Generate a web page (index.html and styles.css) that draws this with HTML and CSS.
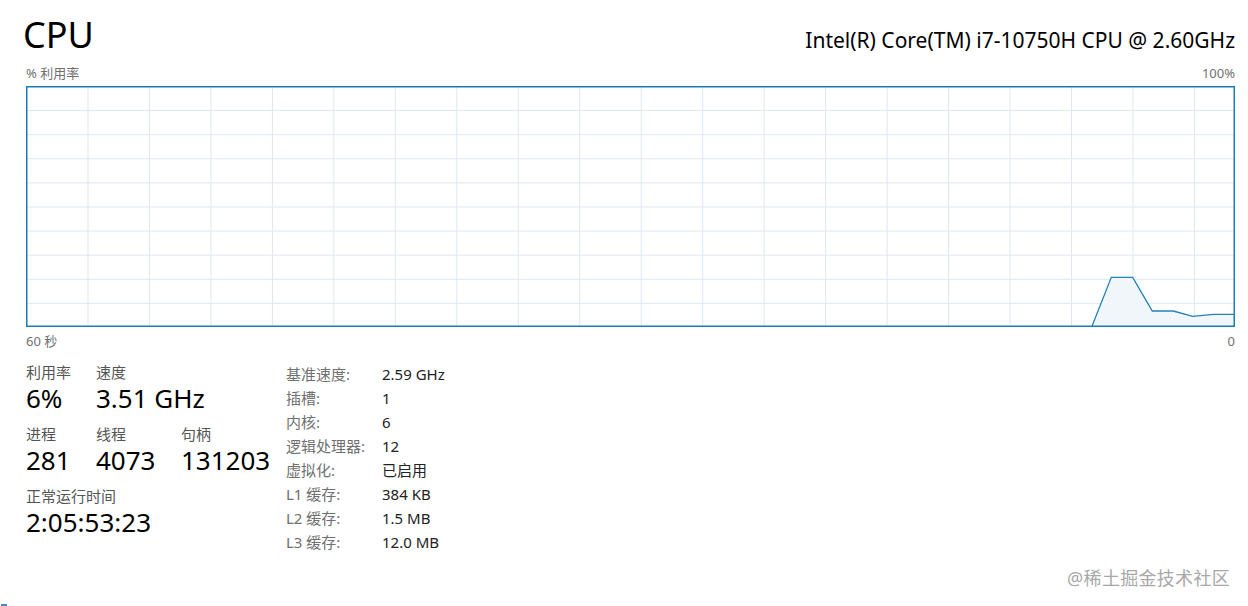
FILE: index.html
```html
<!DOCTYPE html>
<html lang="zh-CN">
<head>
    <meta charset="UTF-8">
    <title>CPU</title>
    <link rel="stylesheet" href="styles.css">
</head>
<body>
    <div class="page">
        <div class="header">
            <h1 class="title">CPU</h1>
            <div class="model">Intel(R) Core(TM) i7-10750H CPU @ 2.60GHz</div>
        </div>

        <div class="axis axis-top">
            <span>% 利用率</span>
            <span>100%</span>
        </div>
        <svg class="graph" width="1209" height="241" viewBox="0 0 1209 241">
            <defs>
                <pattern id="grid" x="61.5" y="0" width="61.47" height="24.1" patternUnits="userSpaceOnUse">
                    <path d="M0.5 0V24.1M0 0.5H61.47" stroke="#dfe6ec" stroke-width="1" fill="none"/>
                </pattern>
            </defs>
            <rect x="0" y="0" width="1209" height="241" fill="url(#grid)"/>
            <polygon class="usage-fill" points="1065.7,241 1085.3,191.3 1106.7,191.3 1126.3,225 1147.3,225 1166.7,230.3 1187.3,228.3 1209,228.3 1209,241"/>
            <polyline class="usage-line" points="1065.7,241 1085.3,191.3 1106.7,191.3 1126.3,225 1147.3,225 1166.7,230.3 1187.3,228.3 1209,228.3"/>
            <rect class="frame" x="0.75" y="0.75" width="1207.5" height="239.5"/>
        </svg>
        <div class="axis axis-bottom">
            <span>60 秒</span>
            <span>0</span>
        </div>

        <div class="stats">
            <div class="dynamic">
                <div class="stat-row">
                    <div class="stat w-70">
                        <div class="stat-label">利用率</div>
                        <div class="stat-value">6%</div>
                    </div>
                    <div class="stat">
                        <div class="stat-label">速度</div>
                        <div class="stat-value">3.51 GHz</div>
                    </div>
                </div>
                <div class="stat-row">
                    <div class="stat w-70">
                        <div class="stat-label">进程</div>
                        <div class="stat-value">281</div>
                    </div>
                    <div class="stat w-85">
                        <div class="stat-label">线程</div>
                        <div class="stat-value">4073</div>
                    </div>
                    <div class="stat">
                        <div class="stat-label">句柄</div>
                        <div class="stat-value">131203</div>
                    </div>
                </div>
                <div class="stat-row">
                    <div class="stat">
                        <div class="stat-label">正常运行时间</div>
                        <div class="stat-value">2:05:53:23</div>
                    </div>
                </div>
            </div>

            <dl class="specs">
                <dt>基准速度:</dt><dd>2.59 GHz</dd>
                <dt>插槽:</dt><dd>1</dd>
                <dt>内核:</dt><dd>6</dd>
                <dt>逻辑处理器:</dt><dd>12</dd>
                <dt>虚拟化:</dt><dd>已启用</dd>
                <dt>L1 缓存:</dt><dd>384 KB</dd>
                <dt>L2 缓存:</dt><dd>1.5 MB</dd>
                <dt>L3 缓存:</dt><dd>12.0 MB</dd>
            </dl>
        </div>
    </div>

    <div class="watermark">@稀土掘金技术社区</div>
    <span class="corner-mark"></span>
</body>
</html>
```

FILE: styles.css
```css
body {
    margin: 0;
    background: #ffffff;
    color: #000000;
    font-family: "Noto Sans", "Noto Sans CJK SC", sans-serif;
    width: 1248px;
    height: 606px;
    overflow: hidden;
    position: relative;
}

.page {
    padding: 0 13px 0 26px;
}

.header {
    display: flex;
    justify-content: space-between;
    align-items: baseline;
    height: 62px;
}

.title {
    margin: 0 0 0 -3px;
    font-size: 36px;
    font-weight: 400;
    line-height: 70px;
}

.model {
    font-size: 21px;
    line-height: 70px;
}

.axis {
    display: flex;
    justify-content: space-between;
    color: #707070;
    font-size: 13px;
}

.axis-top {
    height: 24px;
    line-height: 22px;
}

.axis-bottom {
    height: 32px;
    line-height: 28px;
}

.graph {
    display: block;
}

.frame {
    fill: none;
    stroke: #1a7db6;
    stroke-width: 1.5;
}

.usage-fill {
    fill: #f1f6fb;
}

.usage-line {
    fill: none;
    stroke: #1f82bb;
    stroke-width: 1.3;
}

.stats {
    display: flex;
    padding-top: 3px;
}

.dynamic {
    width: 260px;
}

.stat-row {
    display: flex;
    margin-bottom: 10px;
}

.stat.w-70 {
    width: 70px;
}

.stat.w-85 {
    width: 85px;
}

.stat-label {
    color: #555555;
    font-size: 15px;
    line-height: 20px;
}

.stat-value {
    font-size: 26px;
    line-height: 32px;
}

.specs {
    margin: 0;
    display: grid;
    grid-template-columns: 96px auto;
    font-size: 15px;
    line-height: 24px;
}

.specs dt {
    color: #707070;
}

.specs dd {
    margin: 0;
    color: #222222;
}

.watermark {
    position: absolute;
    right: 18px;
    bottom: 16px;
    font-size: 18px;
    color: #a8a8a8;
    letter-spacing: 0.3px;
}

.corner-mark {
    position: absolute;
    left: 1px;
    bottom: 0;
    width: 6px;
    height: 2px;
    background: #4a86c5;
}
```
